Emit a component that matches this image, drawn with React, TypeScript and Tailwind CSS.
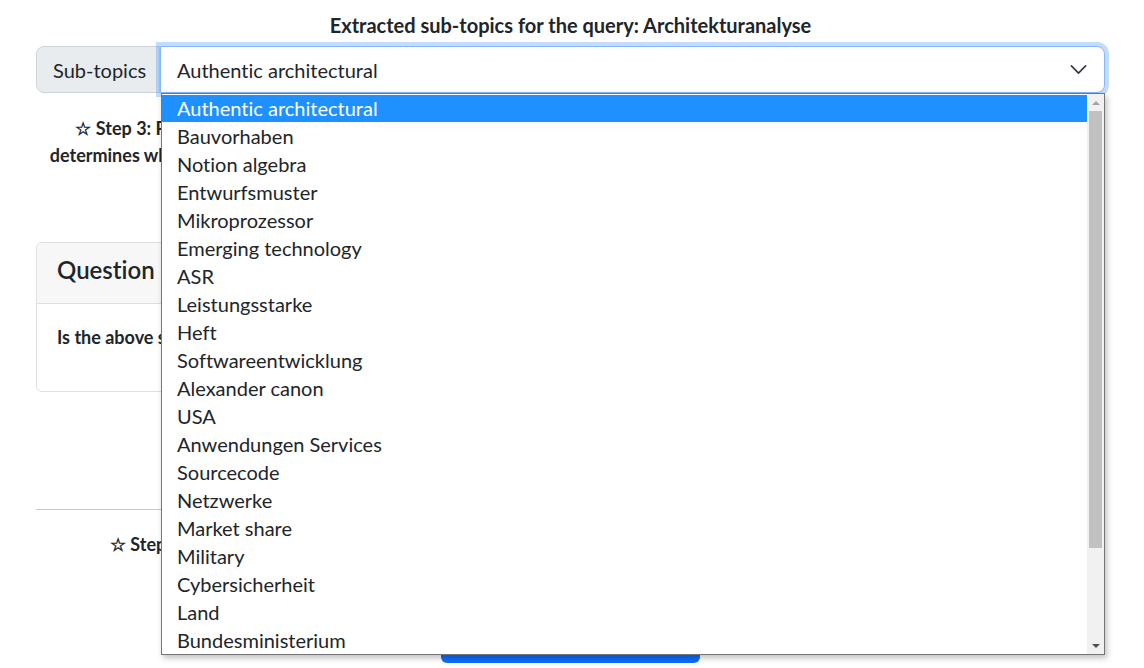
const subTopics = [
  "Authentic architectural",
  "Bauvorhaben",
  "Notion algebra",
  "Entwurfsmuster",
  "Mikroprozessor",
  "Emerging technology",
  "ASR",
  "Leistungsstarke",
  "Heft",
  "Softwareentwicklung",
  "Alexander canon",
  "USA",
  "Anwendungen Services",
  "Sourcecode",
  "Netzwerke",
  "Market share",
  "Military",
  "Cybersicherheit",
  "Land",
  "Bundesministerium",
];

export default function App() {
  return (
    <div className="min-h-screen bg-white text-[#212529] font-['Lato','Liberation_Sans',sans-serif] [font-variant-ligatures:none] overflow-hidden h-[668px]">
      <div className="mx-[36px] w-[1069px]">
        <h5 className="text-center text-[20px] font-bold pt-[12px] h-[42px] leading-[26px]">
          Extracted sub-topics for the query: Architekturanalyse
        </h5>

        {/* input group with open native select */}
        <div className="relative mt-[4px] flex h-[47px]">
          <span className="flex items-center whitespace-nowrap px-[16px] text-[20px] bg-[#e9ecef] border border-[#ced4da] rounded-l-[8px] w-[124px]">
            Sub-topics
          </span>
          <div className="flex-1 flex items-center justify-between pl-[16px] pr-[16px] text-[20px] border border-[#86b7fe] rounded-r-[8px] shadow-[0_0_0_4px_rgba(13,110,253,0.25)] bg-white">
            <span>Authentic architectural</span>
            <svg viewBox="0 0 16 16" className="w-[19px] h-[19px]" fill="none" stroke="#343a40" strokeWidth="1.4" strokeLinecap="round" strokeLinejoin="round">
              <path d="m2 5 6 6 6-6" />
            </svg>
          </div>

          <div className="absolute left-[125px] top-[47px] w-[944px] h-[562px] z-10 bg-white border border-[#767676] shadow-[2px_3px_6px_rgba(0,0,0,0.25)] flex">
            <ul className="flex-1 pt-[1px] text-[20px] leading-[28px]">
              {subTopics.map((t, i) => (
                <li
                  key={t}
                  className={
                    i === 0
                      ? "pl-[15px] h-[27px] leading-[26px] bg-[#1e90ff] text-white"
                      : "pl-[15px] h-[28px] text-[#212529]"
                  }
                >
                  {t}
                </li>
              ))}
            </ul>
            <div className="w-[17px] bg-[#f1f1f1] flex flex-col items-center">
              <div className="h-[17px] flex items-center justify-center">
                <div className="w-0 h-0 border-l-[4px] border-r-[4px] border-b-[4px] border-l-transparent border-r-transparent border-b-[#a3a3a3]" />
              </div>
              <div className="w-[13px] h-[437px] bg-[#c1c1c1]" />
              <div className="flex-1" />
              <div className="h-[17px] flex items-center justify-center">
                <div className="w-0 h-0 border-l-[4px] border-r-[4px] border-t-[4px] border-l-transparent border-r-transparent border-t-[#505050]" />
              </div>
            </div>
          </div>
        </div>

        <p className="mt-[22px] text-center text-[18px] font-bold leading-[27px] whitespace-nowrap">
          ☆ Step 3: Please select one of the extracted sub-topics from the drop-down list above to continue with the full analysis. This
          <br />
          determines which questions will be generated in the next step and how the retrieved documents are ranked for your original query.
        </p>

        <div className="mt-[73px] border border-[#dfdfdf] rounded-[6px] w-[560px] h-[150px]">
          <div className="h-[61px] bg-[#f7f7f7] border-b border-[#dfdfdf] flex items-center pb-[6px] px-[20px] rounded-t-[6px]">
            <h4 className="text-[24px] font-semibold">Question 1</h4>
          </div>
          <div className="px-[20px] pt-[20px]">
            <p className="text-[18px] font-bold leading-[27px]">Is the above sub-topic relevant to your query?</p>
          </div>
        </div>

        <hr className="mt-[117px] border-t border-[#c8c8c8]" />

        <p className="mt-[21px] text-center text-[18px] font-bold leading-[27px] whitespace-nowrap">
          ☆ Step 4: Once you have answered all of the questions above, click the button below to submit all of your feedback.
        </p>

        <div className="mt-[67px] flex justify-center">
          <button className="w-[259px] h-[38px] bg-[#0d6efd] text-white rounded-[6px] text-[18px]">
            Continue
          </button>
        </div>
      </div>
    </div>
  );
}
